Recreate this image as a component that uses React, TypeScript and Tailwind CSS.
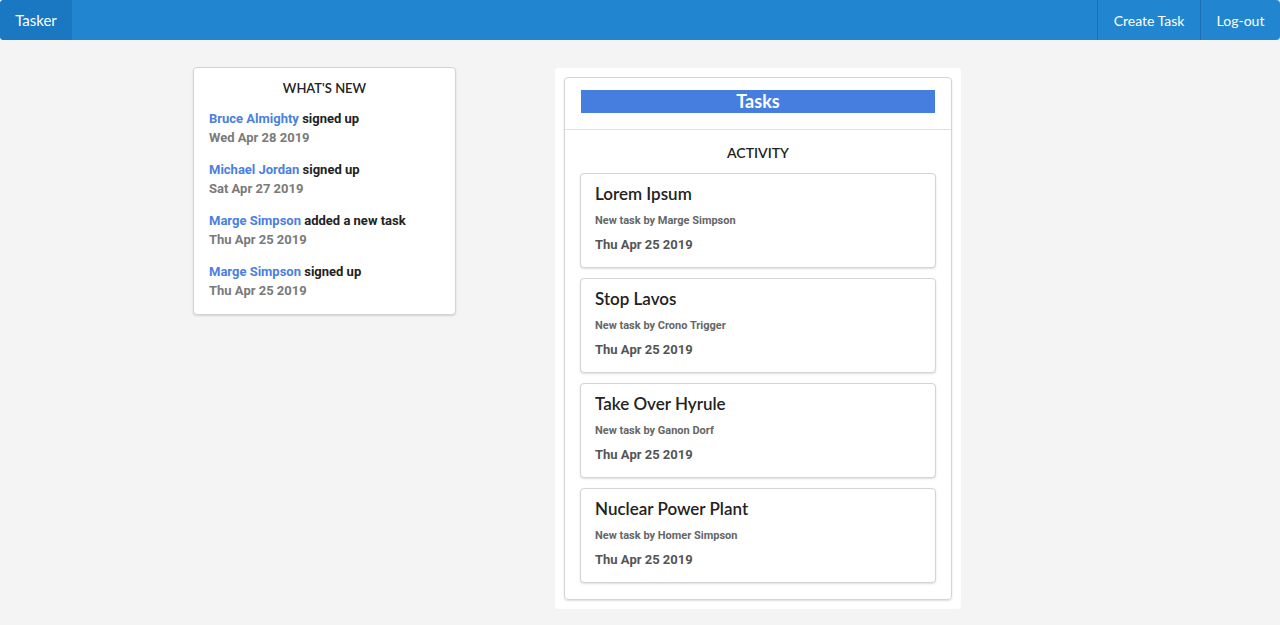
const feed = [
  { name: "Bruce Almighty", action: "signed up", date: "Wed Apr 28 2019" },
  { name: "Michael Jordan", action: "signed up", date: "Sat Apr 27 2019" },
  { name: "Marge Simpson", action: "added a new task", date: "Thu Apr 25 2019" },
  { name: "Marge Simpson", action: "signed up", date: "Thu Apr 25 2019" },
];

const tasks = [
  { title: "Lorem Ipsum", by: "Marge Simpson", date: "Thu Apr 25 2019" },
  { title: "Stop Lavos", by: "Crono Trigger", date: "Thu Apr 25 2019" },
  { title: "Take Over Hyrule", by: "Ganon Dorf", date: "Thu Apr 25 2019" },
  { title: "Nuclear Power Plant", by: "Homer Simpson", date: "Thu Apr 25 2019" },
];

const lato = "font-['Lato',sans-serif]";
const roboto = "font-['Roboto',sans-serif]";

function Navbar() {
  return (
    <div className={`flex h-10 rounded bg-[#2185d0] text-[14px] text-white ${lato}`}>
      <div className="flex w-[72px] items-center justify-center rounded-l bg-[#1a78c2] text-[15px]">Tasker</div>
      <div className="ml-auto flex">
        <div className="flex w-[103px] items-center justify-center border-l border-[#1a70b3]">Create Task</div>
        <div className="flex w-[80px] items-center justify-center border-l border-[#1a70b3]">Log-out</div>
      </div>
    </div>
  );
}

function WhatsNew() {
  return (
    <div className="h-fit w-[263px] rounded border border-[#d4d4d5] bg-white px-[15px] pb-[14px] pt-[11px] shadow-[0_1px_2px_rgba(34,36,38,0.15)]">
      <h3 className={`text-center text-[13px] font-semibold text-[#222] ${lato}`}>WHAT'S NEW</h3>
      <div className={`mt-[10px] flex flex-col gap-[13px] text-[13px] font-bold ${roboto}`}>
        {feed.map((f, i) => (
          <div key={i} className="leading-[19px]">
            <div>
              <span className="text-[#4a80e0]">{f.name}</span> <span className="text-[#222]">{f.action}</span>
            </div>
            <div className="text-[#7a7a7a]">{f.date}</div>
          </div>
        ))}
      </div>
    </div>
  );
}

function TaskCard({ t }: { t: (typeof tasks)[number] }) {
  return (
    <div className="h-[95px] rounded border border-[#d4d4d5] bg-white px-[14px] pt-[9px] shadow-[0_1px_2px_rgba(34,36,38,0.15)]">
      <h4 className={`text-[17px] font-semibold leading-[22px] text-[#222] ${lato}`}>{t.title}</h4>
      <div className={`mt-[8px] text-[11px] font-bold text-[#666] ${roboto}`}>New task by {t.by}</div>
      <div className={`mt-[5px] text-[13px] font-bold text-[#555] ${roboto}`}>{t.date}</div>
    </div>
  );
}

function TasksPanel() {
  return (
    <div className="w-[406px] rounded bg-white p-[9px]">
      <div className="rounded border border-[#d4d4d5] shadow-[0_1px_2px_rgba(34,36,38,0.15)]">
        <div className="border-b border-[#e2e2e3] px-4 pb-4 pt-3">
          <h2 className={`bg-[#467ee0] text-center text-[18px] font-bold leading-[23px] text-white ${lato}`}>Tasks</h2>
        </div>
        <div className="px-[15px] pb-[16px] pt-[12px]">
          <h3 className={`text-center text-[14px] font-semibold text-[#222] ${lato}`}>ACTIVITY</h3>
          <div className="mt-[10px] flex flex-col gap-[10px]">
            {tasks.map((t, i) => (
              <TaskCard key={i} t={t} />
            ))}
          </div>
        </div>
      </div>
    </div>
  );
}

export default function App() {
  return (
    <div className="min-h-[625px] bg-[#f4f4f4]">
      <Navbar />
      <div className="flex items-start gap-[99px] pl-[193px] pt-[27px]">
        <WhatsNew />
        <div className="mt-[1px]">
          <TasksPanel />
        </div>
      </div>
    </div>
  );
}
